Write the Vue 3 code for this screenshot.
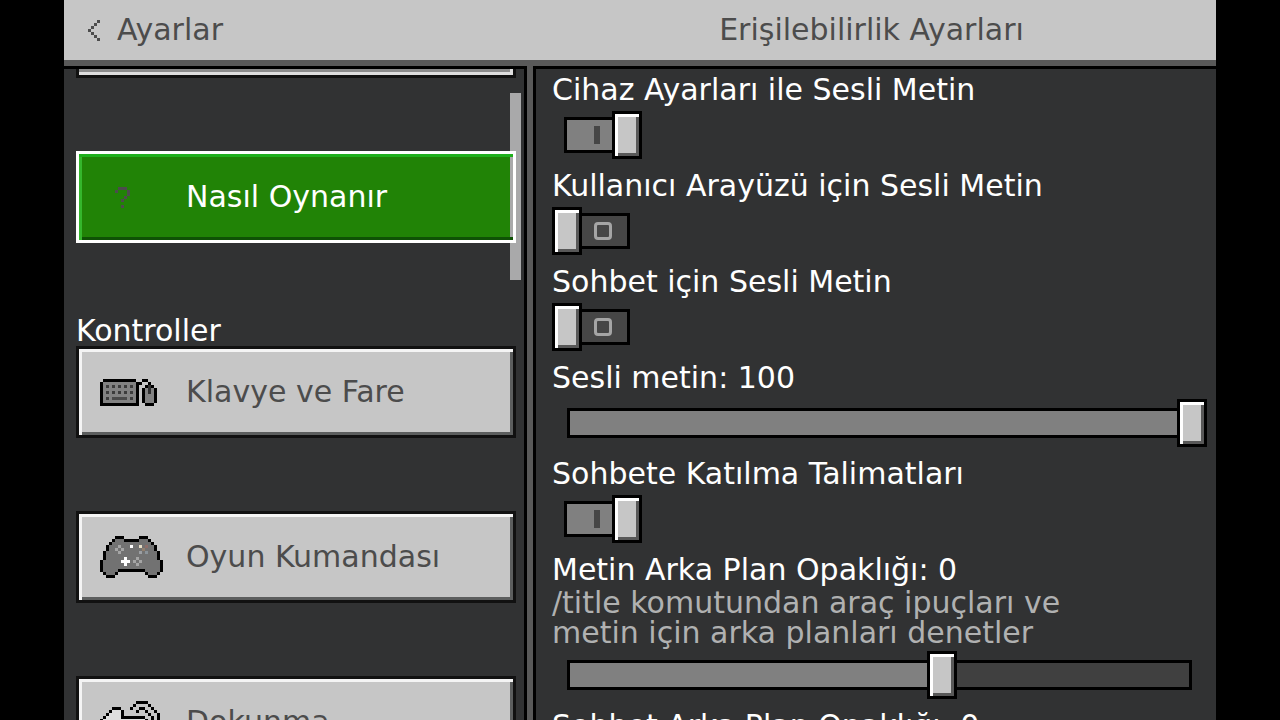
<script setup>
import { reactive } from 'vue'

// Pixel icons: each entry is [x, y, width, height, colour] on a grid of 3px cells
const K = '#000000'
const G = '#727272'
const icons = {
  help: {
    rows: 7,
    px: [[6, 0, 3, 1], [5, 1, 1, 1], [9, 1, 1, 2], [8, 3, 1, 1], [7, 4, 1, 1], [7, 6, 1, 1]].map((r) => [...r, '#4c4c4c']),
  },
  keyboard: {
    rows: 9,
    px: [
      [1, 0, 11, 1, K], [0, 1, 13, 8, K], [1, 1, 11, 7, '#828282'],
      ...[2, 4].flatMap((y) => [2, 4, 6, 8, 10].map((x) => [x, y, 1, 1, '#3c3c3c'])),
      [2, 6, 1, 1, '#3c3c3c'], [4, 6, 5, 1, '#4a4a4a'], [10, 6, 1, 1, '#3c3c3c'],
      [12, 1, 2, 1, K], [14, 0, 2, 1, K], [16, 1, 1, 1, K],
      [15, 2, 3, 7, K], [14, 3, 5, 5, K], [15, 3, 3, 5, '#828282'], [16, 2, 1, 3, '#303030'],
    ],
  },
  gamepad: {
    rows: 14,
    px: [
      [5, 0, 3, 1, K], [13, 0, 3, 1, K], [4, 1, 13, 1, K], [5, 1, 3, 1, G], [13, 1, 3, 1, G],
      [3, 2, 15, 1, K], [4, 2, 13, 1, G],
      [2, 3, 17, 2, K], [3, 3, 15, 2, G],
      [1, 5, 19, 3, K], [2, 5, 17, 3, G],
      [0, 8, 21, 4, K], [1, 8, 19, 3, G], [1, 11, 5, 1, G], [15, 11, 5, 1, G],
      [1, 12, 5, 1, K], [2, 12, 3, 1, G], [15, 12, 5, 1, K], [16, 12, 3, 1, G],
      [2, 13, 3, 1, K], [16, 13, 3, 1, K],
      [6, 3, 1, 1, '#a5a5a5'], [5, 4, 1, 1, '#a5a5a5'], [7, 4, 1, 1, '#a5a5a5'], [6, 5, 1, 1, '#a5a5a5'],
      [10, 3, 1, 1, '#ffffff'], [13, 3, 1, 1, '#e6dcc4'], [15, 3, 1, 1, '#8f6d68'],
      [14, 4, 1, 1, '#93806e'], [13, 5, 1, 1, '#9c9fa3'], [15, 5, 1, 1, '#8b9399'],
      [8, 7, 1, 3, '#ffffff'], [7, 8, 3, 1, '#ffffff'],
      [12, 7, 1, 1, '#a5a5a5'], [11, 8, 1, 1, '#a5a5a5'], [13, 8, 1, 1, '#a5a5a5'], [12, 9, 1, 1, '#a5a5a5'],
    ],
  },
  touch: {
    rows: 14,
    px: [
      [4, 3, 3, 1, '#dedede'], [3, 4, 4, 1, '#dedede'], [2, 5, 5, 1, '#dedede'], [1, 6, 14, 6, '#dedede'],
      [12, 0, 4, 1, K], [11, 1, 1, 1, K], [16, 1, 1, 1, K], [10, 2, 1, 1, K], [17, 2, 1, 1, K],
      [18, 3, 1, 1, K], [19, 4, 1, 4, K],
      [13, 2, 2, 1, K], [12, 3, 1, 1, K], [15, 3, 1, 1, K], [16, 4, 1, 1, K], [17, 5, 1, 2, K],
      [4, 2, 3, 1, K], [3, 3, 1, 1, K], [7, 3, 1, 3, K], [2, 4, 1, 1, K], [1, 5, 1, 1, K],
      [7, 5, 8, 1, K], [0, 6, 1, 6, K], [15, 6, 1, 1, K], [9, 7, 6, 1, K], [9, 8, 1, 4, K], [1, 12, 8, 1, K],
    ],
  },
}
const chevron = [3, 2, 1, 0, 1, 2, 3]

const sections = [
  { items: [{ text: 'Nasıl Oynanır', icon: 'help', active: true }] },
  {
    title: 'Kontroller',
    items: [
      { text: 'Klavye ve Fare', icon: 'keyboard' },
      { text: 'Oyun Kumandası', icon: 'gamepad' },
      { text: 'Dokunma', icon: 'touch' },
    ],
  },
]

const settings = reactive([
  { id: 'tts-device', type: 'toggle', label: 'Cihaz Ayarları ile Sesli Metin', value: true },
  { id: 'tts-ui', type: 'toggle', label: 'Kullanıcı Arayüzü için Sesli Metin', value: false },
  { id: 'tts-chat', type: 'toggle', label: 'Sohbet için Sesli Metin', value: false },
  { id: 'tts-volume', type: 'slider', label: 'Sesli metin: 100', value: 100 },
  { id: 'chat-hints', type: 'toggle', label: 'Sohbete Katılma Talimatları', value: true },
  {
    id: 'text-bg', type: 'slider', label: 'Metin Arka Plan Opaklığı: 0', value: 60,
    hint: ['/title komutundan araç ipuçları ve', 'metin için arka planları denetler'],
  },
  { id: 'chat-bg', type: 'slider', label: 'Sohbet Arka Plan Opaklığı: 0', value: 60 },
])
</script>

<template>
  <div class="screen">
    <header class="topbar">
      <button class="back" type="button">
        <svg class="chevron" viewBox="0 0 4 7" aria-hidden="true">
          <rect v-for="(x, y) in chevron" :key="y" :x="x" :y="y" width="1" height="1" />
        </svg>
        <span>Ayarlar</span>
      </button>
      <h1 class="title">Erişilebilirlik Ayarları</h1>
    </header>

    <div class="panels">
      <nav class="side">
        <div class="clipped"></div>
        <section v-for="(section, i) in sections" :key="i">
          <h2 v-if="section.title" class="group">{{ section.title }}</h2>
          <button
            v-for="item in section.items"
            :key="item.text"
            type="button"
            class="entry"
            :class="{ active: item.active }"
          >
            <svg class="icon" :viewBox="`0 0 21 ${icons[item.icon].rows}`" aria-hidden="true">
              <rect
                v-for="(p, n) in icons[item.icon].px"
                :key="n"
                :x="p[0]" :y="p[1]" :width="p[2]" :height="p[3]" :fill="p[4]"
              />
            </svg>
            <span>{{ item.text }}</span>
          </button>
        </section>
        <div class="scrollbar"></div>
      </nav>

      <div class="divider"></div>

      <main class="content">
        <div v-for="s in settings" :key="s.id" class="setting">
          <label class="label" :for="s.id">{{ s.label }}</label>
          <p v-if="s.hint" class="hint">
            <span v-for="line in s.hint" :key="line">{{ line }}</span>
          </p>
          <input v-if="s.type === 'toggle'" :id="s.id" v-model="s.value" class="toggle" type="checkbox" />
          <input
            v-else
            :id="s.id"
            v-model.number="s.value"
            class="slider"
            type="range"
            min="0"
            max="100"
            :style="{ '--fill': s.value / 100 }"
          />
        </div>
      </main>
    </div>
  </div>
</template>

<style>
body {
  margin: 0;
  background: #000;
}
</style>

<style scoped>
.screen {
  box-sizing: border-box;
  height: 100vh;
  padding: 0 5%;
  display: flex;
  flex-direction: column;
  overflow: hidden;
  background: #000;
  font-family: "DejaVu Sans", sans-serif;
  font-size: 30px;
  line-height: 30px;
  color: #fff;
}
button {
  font: inherit;
  text-align: left;
  cursor: pointer;
}
svg {
  shape-rendering: crispEdges;
  flex: none;
}
.topbar,
.panels {
  display: grid;
  grid-template-columns: 463fr 6px 683fr;
}
.topbar {
  flex: none;
  height: 60px;
  align-items: center;
  background: #c6c6c6;
  border-bottom: 6px solid #595959;
  color: #4c4c4c;
}
.back {
  display: flex;
  align-items: center;
  gap: 17px;
  padding: 0 24px;
  border: 0;
  background: none;
  color: inherit;
}
.chevron {
  width: 12px;
  height: 21px;
  fill: #4c4c4c;
}
.title {
  grid-column: 2 / 4;
  margin: 0;
  font-size: 30px;
  font-weight: 400;
  text-align: center;
}
.panels {
  flex: 1;
  min-height: 0;
}
.side {
  position: relative;
  overflow: hidden;
  padding: 0 8px 0 12px;
  background: #313233;
  border-top: 3px solid #000;
  border-right: 3px solid #000;
}
.divider {
  background: #595959;
}
.clipped {
  box-sizing: border-box;
  height: 9px;
  margin-bottom: 73px;
  border: 3px solid #111;
  border-top: 0;
  background: #8b8b8b;
  box-shadow: inset -3px -3px 0 #dedede;
}
.group {
  margin: 0;
  font-size: 30px;
  font-weight: 400;
}
.entry {
  box-sizing: border-box;
  display: flex;
  align-items: center;
  gap: 23px;
  width: 100%;
  height: 92px;
  margin: 0 0 73px;
  padding: 0 21px;
  border: 3px solid #111;
  background: #c6c6c6;
  box-shadow: inset 3px 3px 0 #f4f4f4, inset -3px -3px 0 #5c5e5e;
  color: #4c4c4c;
}
.clipped,
.entry {
  position: relative;
  z-index: 1;
}
.entry.active {
  border-color: #fff;
  background: #218306;
  box-shadow: inset 0 3px 0 #1fb01c, inset 3px 0 0 #35b62c, inset 0 -3px 0 #0f5205, inset -3px 0 0 #a9a9aa;
  color: #fff;
}
.icon {
  width: 63px;
}
.scrollbar {
  position: absolute;
  top: 24px;
  right: 3px;
  width: 11px;
  height: 187px;
  background: #a9a9aa;
}
.content {
  overflow: hidden;
  padding: 6px 9px 0 16px;
  background: #313233;
  border-top: 3px solid #000;
  border-left: 3px solid #000;
}
.setting {
  display: flex;
  flex-direction: column;
  align-items: flex-start;
  margin-bottom: 12px;
}
.hint {
  margin: 3px 0 -3px;
  color: #b0b1b1;
}
.hint span {
  display: block;
}
.toggle {
  box-sizing: border-box;
  position: relative;
  appearance: none;
  width: 66px;
  height: 36px;
  margin: 12px 0 6px 12px;
  border: 3px solid #000;
  background: #464646;
}
.toggle:checked {
  background: #808080;
}
.toggle::before {
  content: "";
  box-sizing: border-box;
  position: absolute;
  top: -9px;
  left: -15px;
  width: 30px;
  height: 48px;
  border: 3px solid #000;
  background: #c6c6c6;
  box-shadow: inset 3px 3px 0 #fff, inset -3px -3px 0 #585858;
}
.toggle:checked::before {
  left: 45px;
}
.toggle::after {
  content: "";
  box-sizing: border-box;
  position: absolute;
  top: 6px;
  left: 27px;
  width: 18px;
  height: 18px;
  border: 3px solid #a5a5a5;
  border-radius: 4px;
}
.toggle:checked::after {
  width: 6px;
  border-color: #464646;
  border-radius: 0;
}
.slider {
  appearance: none;
  width: 100%;
  height: 48px;
  margin: 6px 0 0;
  background:
    linear-gradient(#808080, #808080) 18px 12px / calc((100% - 36px) * var(--fill)) 24px no-repeat,
    linear-gradient(#404040, #404040) 18px 12px / calc(100% - 36px) 24px no-repeat,
    linear-gradient(#000, #000) 15px 9px / calc(100% - 30px) 30px no-repeat;
}
.slider::-webkit-slider-thumb {
  appearance: none;
  box-sizing: border-box;
  width: 30px;
  height: 48px;
  border: 3px solid #000;
  border-radius: 0;
  background: #c6c6c6;
  box-shadow: inset 3px 3px 0 #fff, inset -3px -3px 0 #585858;
}
</style>
